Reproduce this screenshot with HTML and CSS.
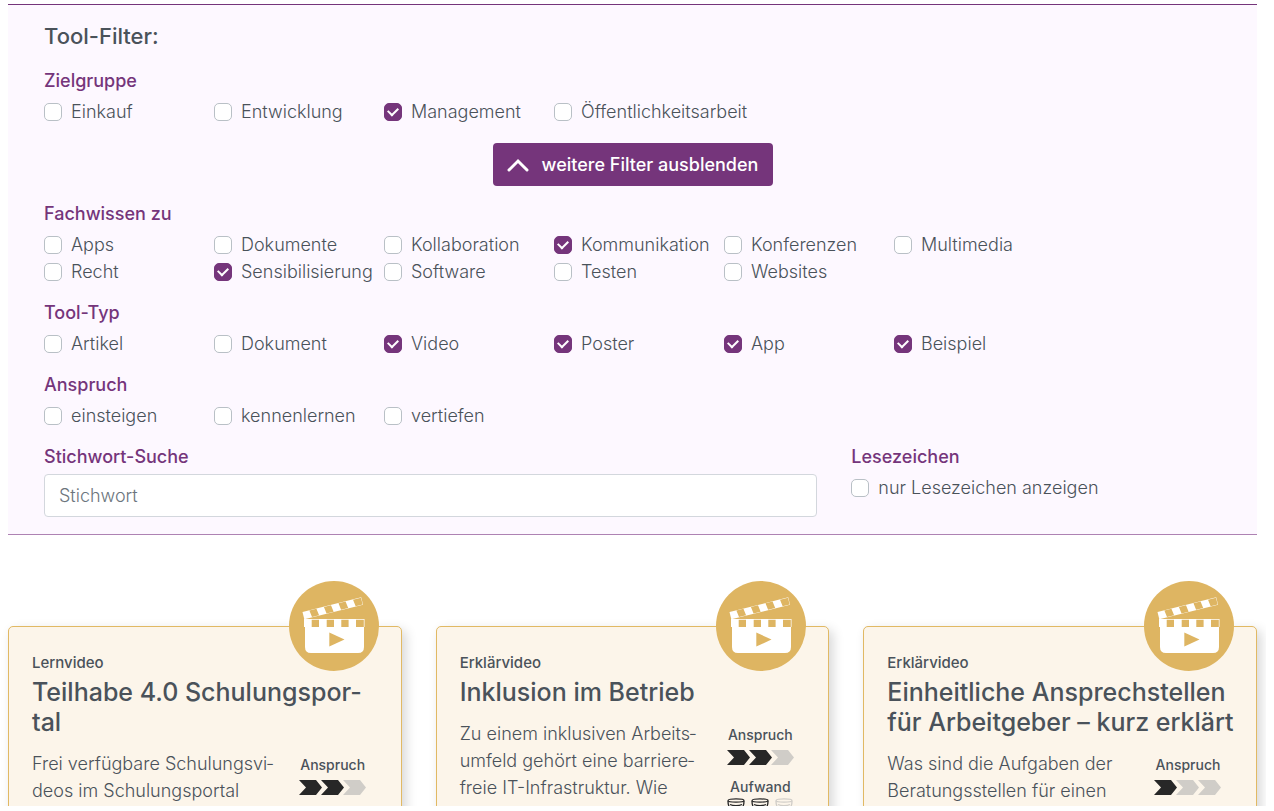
FILE: index.html
```html
<!DOCTYPE html>
<html lang="de">
<head>
    <meta charset="UTF-8">
    <meta name="viewport" content="width=device-width, initial-scale=1.0">
    <title>Tool-Filter</title>
    <link rel="stylesheet" href="styles.css">
</head>
<body>
    <!-- shared icons -->
    <svg class="sprite" aria-hidden="true">
        <symbol id="clapper" viewBox="0 0 90 90">
            <circle cx="45" cy="45" r="45" fill="#deb562"/>
            <path d="M15 38h60.500v8h-.5v20q0 6-6 6H22q-6 0-6-6V46h-1z" fill="#fff"/>
            <path d="M22.700 38.700h7.300v7.300h-7.300zM37.700 38.700h7.300v7.300h-7.300zM52.300 38.700h7.300v7.300h-7.300zM67 38.700h7.800v7.300h-7.800z" fill="#deb562"/>
            <g transform="translate(13.500 31) rotate(-14)">
                <path d="M0 0h60.500v7.500H0z" fill="#fff"/>
                <path d="M7 .3h7.300l1 6.900H8zM22 .3h7.300l1 6.900h-7.300zM37 .3h7.300l1 6.900h-7.300zM52 .3h8.200v6.900h-7.200z" fill="#deb562"/>
            </g>
            <path d="M40.300 51.500l15.200 7-15.200 7z" fill="#deb562"/>
        </symbol>
        <symbol id="arrow" viewBox="0 0 23 15">
            <path d="M0 0h17l6 7.500-6 7.500H0l7-7.500z"/>
        </symbol>
        <symbol id="cup" viewBox="0 0 18 16">
            <g fill="none" stroke="currentColor" stroke-width="1.300">
                <ellipse cx="9" cy="2.500" rx="8" ry="1.600"/>
                <path d="M1 3c0 6 3 9 5 9h6c2 0 5-3 5-9M3 6.500c3 1.500 9 1.500 12 0M3 15h12"/>
            </g>
        </symbol>
    </svg>

    <main class="page">
        <form class="filter">
            <h2 class="filter_title">Tool-Filter:</h2>

            <fieldset class="group">
                <legend>Zielgruppe</legend>
                <div class="options">
                    <label><input type="checkbox">Einkauf</label>
                    <label><input type="checkbox">Entwicklung</label>
                    <label><input type="checkbox" checked>Management</label>
                    <label><input type="checkbox">Öffentlichkeitsarbeit</label>
                </div>
            </fieldset>

            <button type="button" class="toggle">
                <svg width="22" height="14" viewBox="0 0 22 14" aria-hidden="true"><path d="M2 12l9-9 9 9" fill="none" stroke="#fff" stroke-width="3" stroke-linecap="round"/></svg>
                weitere Filter ausblenden
            </button>

            <fieldset class="group">
                <legend>Fachwissen zu</legend>
                <div class="options">
                    <label><input type="checkbox">Apps</label>
                    <label><input type="checkbox">Dokumente</label>
                    <label><input type="checkbox">Kollaboration</label>
                    <label><input type="checkbox" checked>Kommunikation</label>
                    <label><input type="checkbox">Konferenzen</label>
                    <label><input type="checkbox">Multimedia</label>
                    <label><input type="checkbox">Recht</label>
                    <label><input type="checkbox" checked>Sensibilisierung</label>
                    <label><input type="checkbox">Software</label>
                    <label><input type="checkbox">Testen</label>
                    <label><input type="checkbox">Websites</label>
                </div>
            </fieldset>

            <fieldset class="group">
                <legend>Tool-Typ</legend>
                <div class="options">
                    <label><input type="checkbox">Artikel</label>
                    <label><input type="checkbox">Dokument</label>
                    <label><input type="checkbox" checked>Video</label>
                    <label><input type="checkbox" checked>Poster</label>
                    <label><input type="checkbox" checked>App</label>
                    <label><input type="checkbox" checked>Beispiel</label>
                </div>
            </fieldset>

            <fieldset class="group">
                <legend>Anspruch</legend>
                <div class="options">
                    <label><input type="checkbox">einsteigen</label>
                    <label><input type="checkbox">kennenlernen</label>
                    <label><input type="checkbox">vertiefen</label>
                </div>
            </fieldset>

            <div class="search_row">
                <div class="search">
                    <label class="search_label" for="keyword">Stichwort-Suche</label>
                    <input type="text" id="keyword" class="search_box" placeholder="Stichwort">
                </div>
                <fieldset>
                    <legend>Lesezeichen</legend>
                    <div class="options">
                        <label><input type="checkbox">nur Lesezeichen anzeigen</label>
                    </div>
                </fieldset>
            </div>
        </form>

        <section class="cards">
            <article class="card">
                <svg class="card_icon" aria-hidden="true"><use href="#clapper"/></svg>
                <p class="card_type">Lernvideo</p>
                <h3 class="card_title">Teilhabe 4.0 Schulungspor-<br>tal</h3>
                <div class="card_body">
                    <p class="card_text">Frei verfügbare Schulungsvi&shy;deos im Schulungsportal</p>
                    <div class="rating">
                        <span>Anspruch</span>
                        <div class="arrows">
                            <svg><use href="#arrow"/></svg>
                            <svg><use href="#arrow"/></svg>
                            <svg class="off"><use href="#arrow"/></svg>
                        </div>
                    </div>
                </div>
            </article>

            <article class="card">
                <svg class="card_icon" aria-hidden="true"><use href="#clapper"/></svg>
                <p class="card_type">Erklärvideo</p>
                <h3 class="card_title">Inklusion im Betrieb</h3>
                <div class="card_body">
                    <p class="card_text">Zu einem inklusiven Arbeits&shy;umfeld gehört eine barriere&shy;freie IT-Infrastruktur. Wie</p>
                    <div class="rating">
                        <span>Anspruch</span>
                        <div class="arrows">
                            <svg><use href="#arrow"/></svg>
                            <svg><use href="#arrow"/></svg>
                            <svg class="off"><use href="#arrow"/></svg>
                        </div>
                        <span>Aufwand</span>
                        <div class="cups">
                            <svg><use href="#cup"/></svg>
                            <svg><use href="#cup"/></svg>
                            <svg class="off"><use href="#cup"/></svg>
                        </div>
                    </div>
                </div>
            </article>

            <article class="card">
                <svg class="card_icon" aria-hidden="true"><use href="#clapper"/></svg>
                <p class="card_type">Erklärvideo</p>
                <h3 class="card_title">Einheitliche Ansprechstellen für Arbeitgeber – kurz erklärt</h3>
                <div class="card_body">
                    <p class="card_text">Was sind die Aufgaben der Beratungsstellen für einen</p>
                    <div class="rating">
                        <span>Anspruch</span>
                        <div class="arrows">
                            <svg><use href="#arrow"/></svg>
                            <svg class="off"><use href="#arrow"/></svg>
                            <svg class="off"><use href="#arrow"/></svg>
                        </div>
                    </div>
                </div>
            </article>
        </section>
    </main>
</body>
</html>
```
FILE: styles.css
```css
*{
    box-sizing:border-box;
}
body{
    margin:0;
    background:#fff;
    color:#4a525a;
    font-family:Inter, "Liberation Sans", sans-serif;
    font-size:18px;
    font-weight:300;
    line-height:27px;
}
h2, h3, p, fieldset, legend{
    margin:0;
    padding:0;
    border:0;
}
.sprite{
    position:absolute;
    width:0;
    height:0;
}
.page{
    height:calc(100vh - 5px);
    margin-right:8px;
    padding:4px 9px 0 8px;
    overflow:hidden;
}

/* filter */
.filter{
    padding:18px 36px 17px;
    background:#fdf8ff;
    border-top:1px solid #75357b;
    border-bottom:1px solid #ae82b3;
}
.filter_title{
    margin-bottom:17px;
    font-size:22px;
    font-weight:500;
    line-height:27px;
}
.group{
    margin-bottom:14px;
}
legend, .search_label{
    display:block;
    margin-bottom:4px;
    color:#75357b;
    font-weight:500;
}
.options{
    display:grid;
    grid-template-columns:repeat(auto-fill, 170px);
    max-width:1060px;
}
.options label{
    display:flex;
    align-items:center;
    gap:9px;
    white-space:nowrap;
}
.options input{
    appearance:none;
    flex:none;
    width:18px;
    height:18px;
    margin:0;
    background:#fff;
    border:1px solid #b9c0c6;
    border-radius:5px;
    display:grid;
    place-items:center;
}
.options input:checked{
    background:#75357b;
    border-color:#75357b;
}
.options input:checked::before{
    content:"";
    width:8px;
    height:5px;
    margin-bottom:2px;
    border-left:2px solid #fff;
    border-bottom:2px solid #fff;
    transform:rotate(-45deg);
}
.toggle{
    display:flex;
    align-items:center;
    justify-content:center;
    gap:13px;
    width:280px;
    height:43px;
    margin:18px auto 14px;
    padding:0;
    color:#fff;
    background:#75357b;
    border:0;
    border-radius:4px;
    font:500 18px/27px Inter, "Liberation Sans", sans-serif;
}
.search_row{
    display:grid;
    grid-template-columns:repeat(3, minmax(0, 1fr));
    column-gap:34px;
}
.search{
    grid-column:span 2;
}
.search_box{
    display:block;
    width:100%;
    height:43px;
    padding:0 14px;
    color:#4a525a;
    background:#fff;
    border:1px solid #d3d7dd;
    border-radius:4px;
    font:inherit;
}
.search_box::placeholder{
    color:#6c757d;
    opacity:1;
}

/* cards */
.cards{
    display:grid;
    grid-template-columns:repeat(3, minmax(0, 1fr));
    column-gap:34px;
    margin-top:91px;
}
.card{
    position:relative;
    min-height:360px;
    padding:24px 12px 24px 23px;
    background:#fcf5ea;
    border:1px solid #e1b964;
    border-radius:5px;
    box-shadow:4px 4px 12px rgba(0, 0, 0, 0.16);
}
.card_icon{
    position:absolute;
    top:-46px;
    right:22px;
    width:90px;
    height:90px;
}
.card_type{
    margin-bottom:2px;
    font-size:15px;
    font-weight:500;
    line-height:24px;
}
.card_title{
    margin-bottom:13px;
    font-size:25px;
    font-weight:500;
    line-height:30px;
}
.card_body{
    display:flex;
    justify-content:space-between;
    padding-right:11px;
}
.card_text{
    width:244px;
}
.rating{
    display:flex;
    flex-direction:column;
    align-items:center;
    width:90px;
    padding-top:4px;
    font-size:14px;
    font-weight:500;
    line-height:22px;
}
.arrows{
    display:flex;
    margin:4px 0 11px;
    color:#272727;
}
.arrows svg{
    width:23px;
    height:15px;
    fill:currentColor;
}
.arrows svg + svg{
    margin-left:-1px;
}
.arrows .off, .cups .off{
    color:#d0cdc8;
}
.cups{
    display:flex;
    gap:6px;
    color:#272727;
}
.cups svg{
    width:18px;
    height:16px;
}
```
